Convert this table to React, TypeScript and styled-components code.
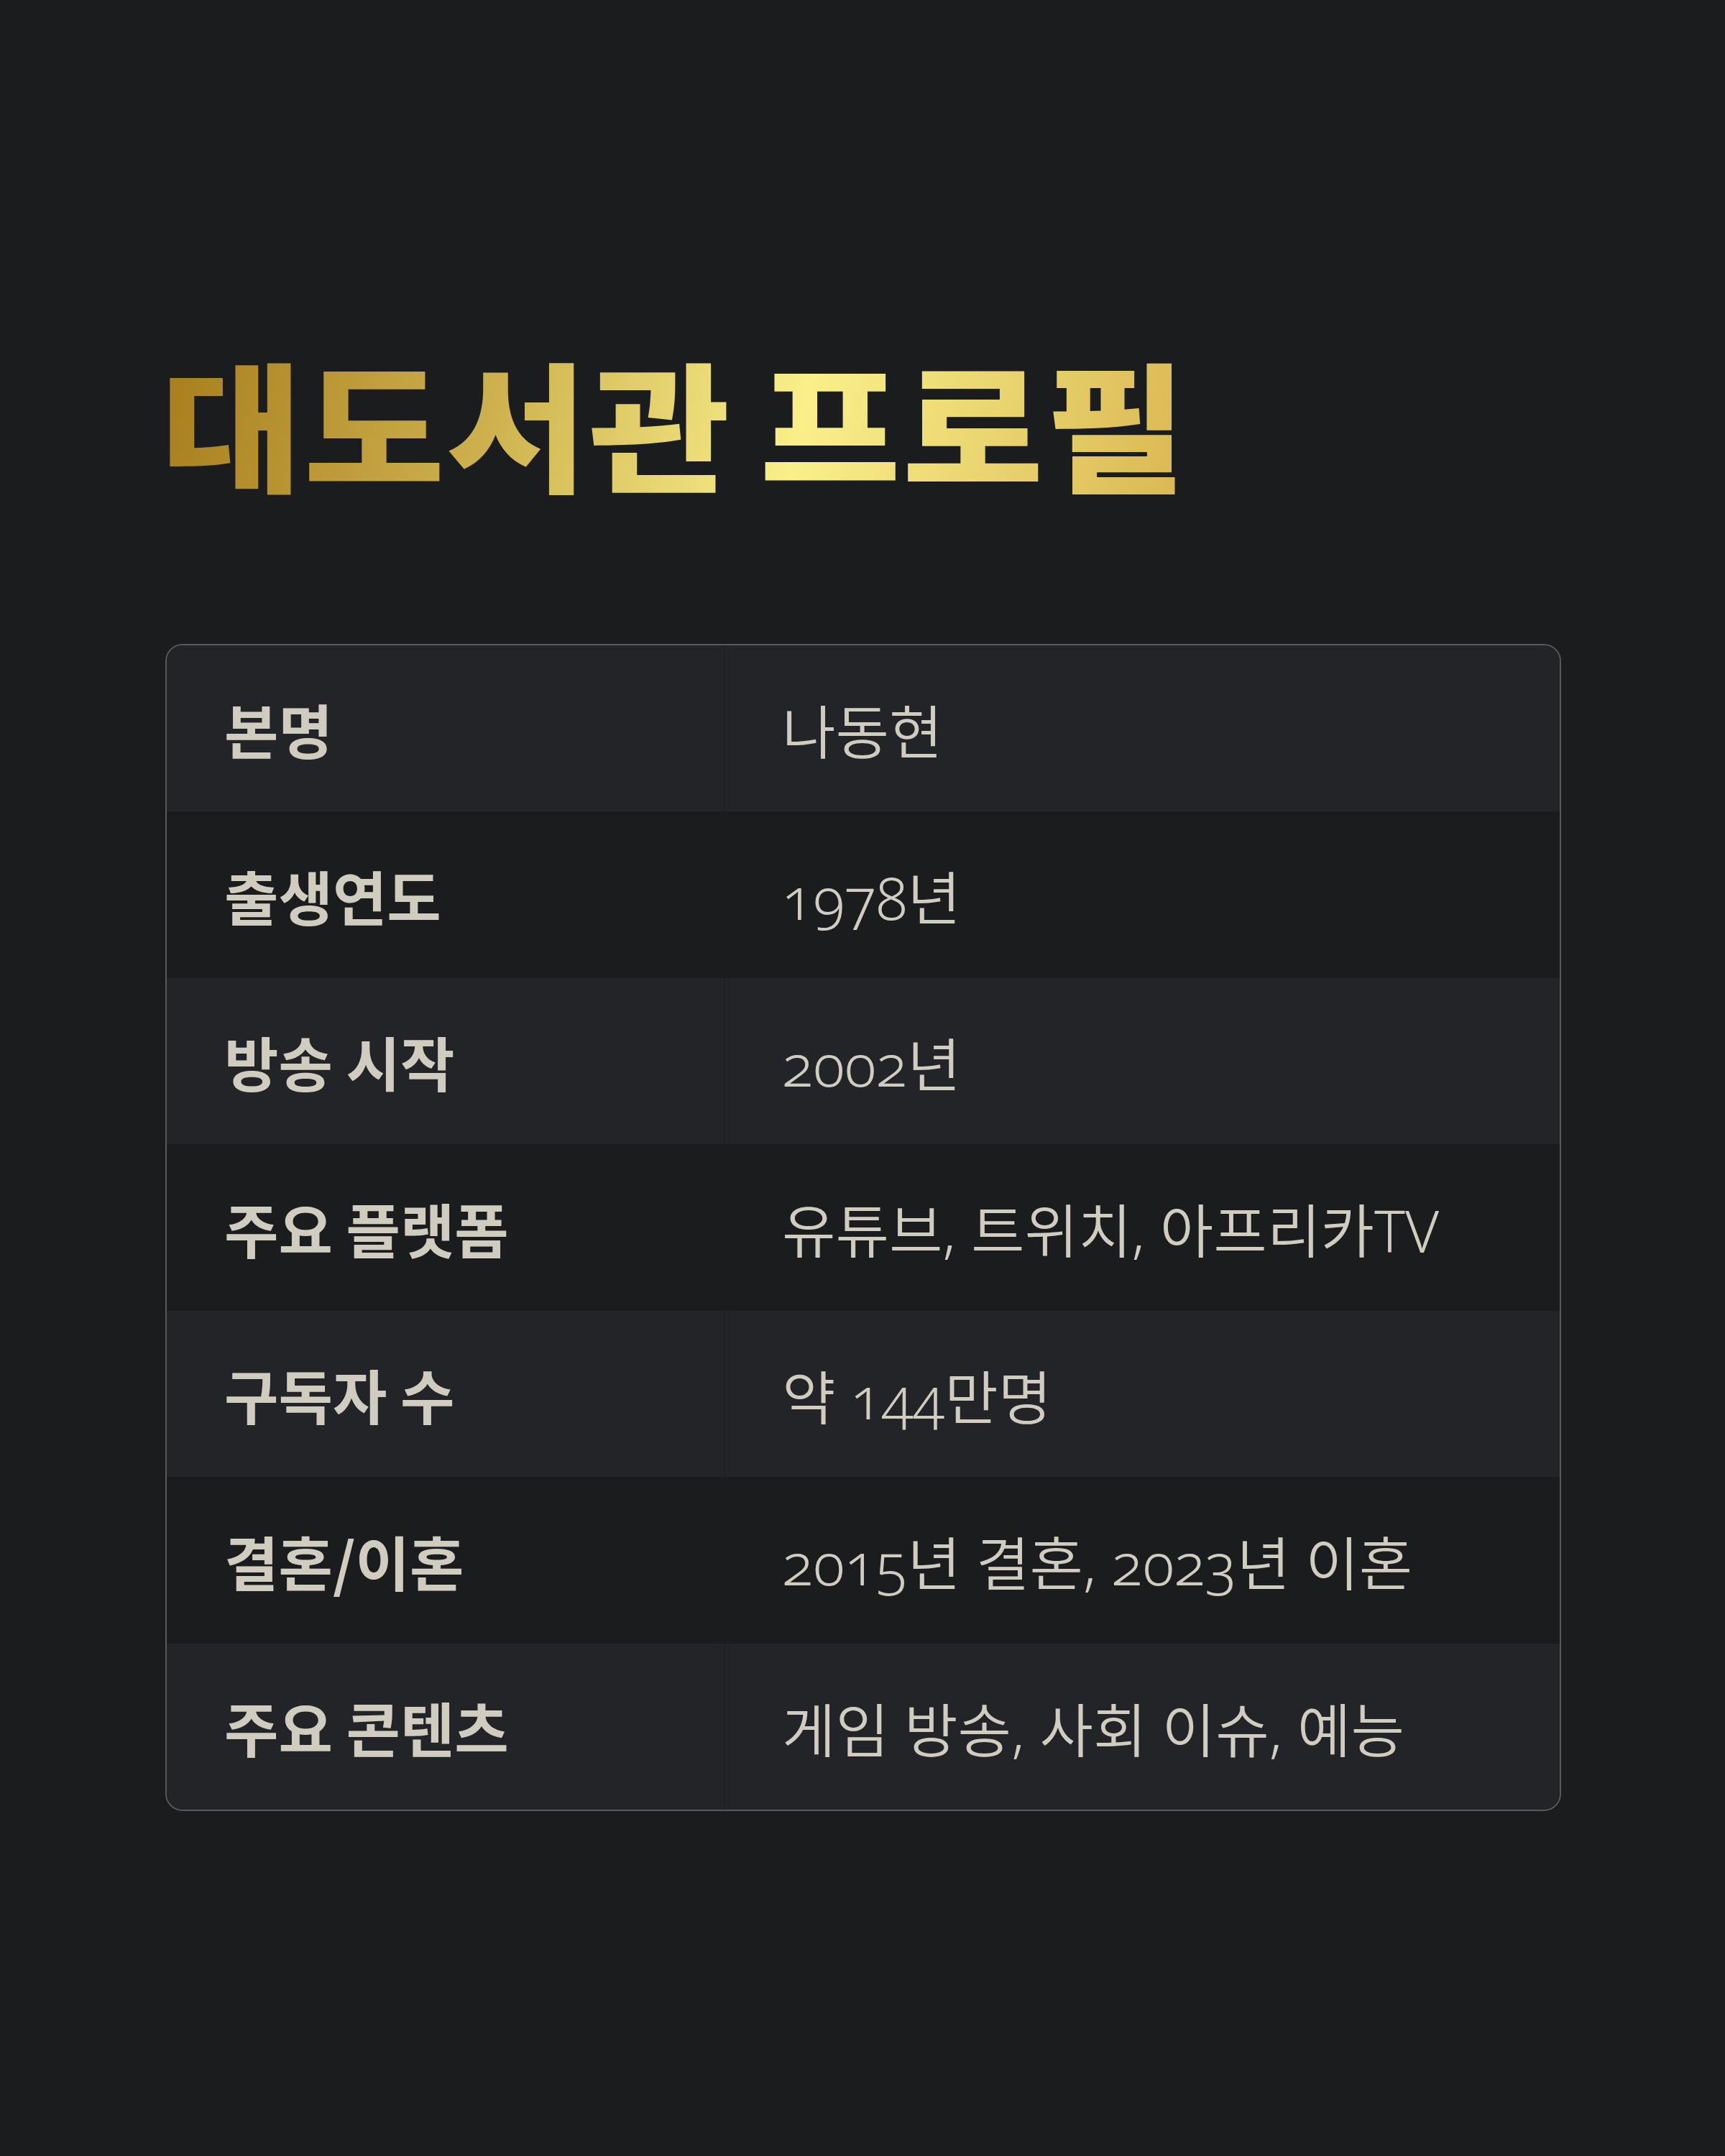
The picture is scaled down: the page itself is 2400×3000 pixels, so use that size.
import styled, { createGlobalStyle } from 'styled-components';

const rows: [string, string][] = [
  ['본명', '나동현'],
  ['출생연도', '1978년'],
  ['방송 시작', '2002년'],
  ['주요 플랫폼', '유튜브, 트위치, 아프리카TV'],
  ['구독자 수', '약 144만명'],
  ['결혼/이혼', '2015년 결혼, 2023년 이혼'],
  ['주요 콘텐츠', '게임 방송, 사회 이슈, 예능'],
];

function App() {
  return (
    <>
      <GlobalStyle />
      <Page>
        <Title>대도서관 프로필</Title>
        <Table>
          {rows.map(([label, value], i) => (
            <Row key={label} $alt={i % 2 === 1}>
              <Label>{label}</Label>
              <Value $alt={i % 2 === 1}>{value}</Value>
            </Row>
          ))}
        </Table>
      </Page>
    </>
  );
}

const GlobalStyle = createGlobalStyle`
  body {
    margin: 0;
    background: #1b1c1e;
  }
`;

const Page = styled.div`
  width: 2400px;
  height: 3000px;
  box-sizing: border-box;
  padding: 470px 228px 0 230px;
  background: #1b1c1e;
  font-family: 'Noto Sans CJK KR', sans-serif;
`;

const Title = styled.h1`
  display: inline-block;
  margin: 0 0 0 -6px;
  font-family: 'Noto Sans CJK KR', sans-serif;
  font-weight: 900;
  font-size: 194px;
  line-height: 1.2;
  letter-spacing: 2px;
  word-spacing: -11px;
  transform: scaleX(1.1);
  transform-origin: left center;
  background: linear-gradient(100deg, #a87d1c 0%, #cdb04e 32%, #f9f08a 62%, #d9b752 100%);
  -webkit-background-clip: text;
  background-clip: text;
  color: transparent;
`;

const Table = styled.div`
  margin-top: 193px;
  width: 1942px;
  box-sizing: border-box;
  border: 2px solid #58595b;
  border-radius: 24px;
  overflow: hidden;
`;

const Row = styled.div<{ $alt: boolean }>`
  display: grid;
  grid-template-columns: 775px 1fr;
  height: 231.5px;
  background: ${({ $alt }) => ($alt ? '#1b1c1e' : '#232427')};
`;

const Label = styled.div`
  display: flex;
  align-items: center;
  padding-left: 80px;
  font-family: 'Noto Sans CJK KR', sans-serif;
  font-weight: 700;
  font-size: 82px;
  color: #d0ccc0;
`;

const Value = styled.div<{ $alt: boolean }>`
  display: flex;
  align-items: center;
  padding-left: 79px;
  border-left: 2px solid ${({ $alt }) => ($alt ? '#1b1c1e' : '#1e1f22')};
  font-family: 'Noto Sans', 'Noto Sans CJK KR', sans-serif;
  font-weight: 350;
  font-size: 81px;
  font-variant-numeric: oldstyle-nums;
  color: #d0ccc0;
`;

export default App;
